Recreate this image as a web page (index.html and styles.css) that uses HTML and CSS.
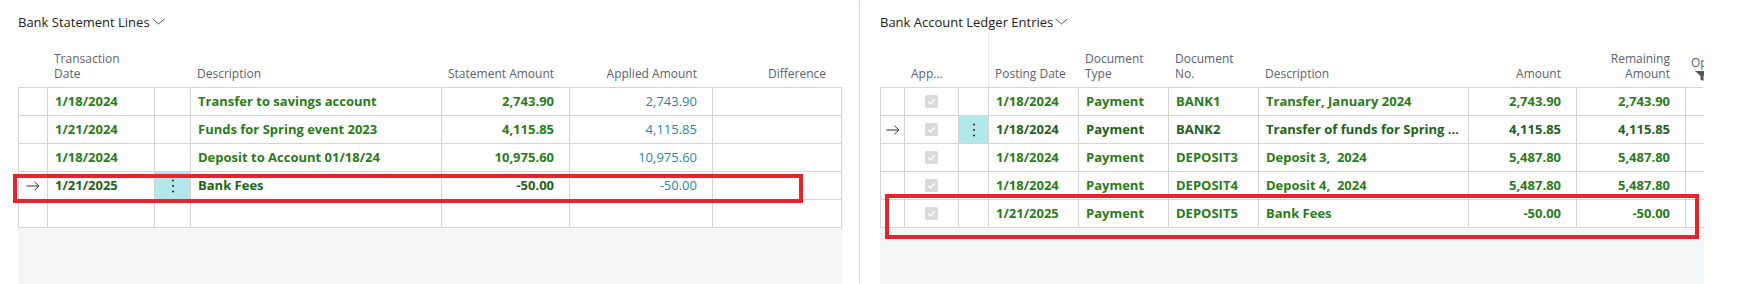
FILE: index.html
```html
<!DOCTYPE html>
<html>
<head>
<meta charset="utf-8">
<link rel="stylesheet" href="styles.css">
</head>
<body>
<div class="page">
  <section class="panel panel-left">
    <div class="title">Bank Statement Lines<svg class="chev" width="13" height="7" viewBox="0 0 13 7"><polyline points="0.5,0.8 6.5,6 12.5,0.8" fill="none" stroke="#555" stroke-width="1"/></svg></div>
    <div class="grid-wrap">
      <div class="head cols-left">
        <div class="hc"></div>
        <div class="hc">Transaction<br>Date</div>
        <div class="hc"></div>
        <div class="hc">Description</div>
        <div class="hc num">Statement Amount</div>
        <div class="hc num">Applied Amount</div>
        <div class="hc num last">Difference</div>
      </div>
      <div class="body">
        <div class="row cols-left">
          <div class="c"></div><div class="c">1/18/2024</div><div class="c"></div><div class="c">Transfer to savings account</div><div class="c num">2,743.90</div><div class="c num applied">2,743.90</div><div class="c"></div>
        </div>
        <div class="row cols-left">
          <div class="c"></div><div class="c">1/21/2024</div><div class="c"></div><div class="c">Funds for Spring event 2023</div><div class="c num">4,115.85</div><div class="c num applied">4,115.85</div><div class="c"></div>
        </div>
        <div class="row cols-left">
          <div class="c"></div><div class="c">1/18/2024</div><div class="c"></div><div class="c">Deposit to Account 01/18/24</div><div class="c num">10,975.60</div><div class="c num applied">10,975.60</div><div class="c"></div>
        </div>
        <div class="row cols-left sel">
          <div class="c ctr"><svg width="14" height="10" viewBox="0 0 14 10"><path d="M0.5 5H13M8.5 0.8L13 5L8.5 9.2" fill="none" stroke="#333" stroke-width="1"/></svg></div><div class="c">1/21/2025</div><div class="c ctr hl"><svg width="4" height="16" viewBox="0 0 4 16"><circle cx="2" cy="2.5" r="1.1" fill="#333"/><circle cx="2" cy="8" r="1.1" fill="#333"/><circle cx="2" cy="13.5" r="1.1" fill="#333"/></svg></div><div class="c">Bank Fees</div><div class="c num">-50.00</div><div class="c num applied">-50.00</div><div class="c"></div>
        </div>
        <div class="row cols-left">
          <div class="c"></div><div class="c"></div><div class="c"></div><div class="c"></div><div class="c"></div><div class="c"></div><div class="c"></div>
        </div>
      </div>
      <div class="filler"></div>
    </div>
  </section>

  <section class="panel panel-right">
    <div class="title">Bank Account Ledger Entries<svg class="chev" width="13" height="7" viewBox="0 0 13 7"><polyline points="0.5,0.8 6.5,6 12.5,0.8" fill="none" stroke="#555" stroke-width="1"/></svg></div>
    <div class="grid-wrap">
      <div class="head cols-right">
        <div class="hc"></div>
        <div class="hc">App...</div>
        <div class="hc divider"></div>
        <div class="hc">Posting Date</div>
        <div class="hc">Document<br>Type</div>
        <div class="hc">Document<br>No.</div>
        <div class="hc">Description</div>
        <div class="hc num">Amount</div>
        <div class="hc num">Remaining<br>Amount</div>
        <div class="hc open">Open<br><svg width="14" height="10" viewBox="0 0 14 10"><path d="M0 0H14L8.5 5V10L5.5 8.5V5Z" fill="#555"/></svg></div>
      </div>
      <div class="body">
        <div class="row cols-right">
          <div class="c"></div><div class="c ctr"><span class="cb"><svg width="13" height="13" viewBox="0 0 13 13"><rect width="13" height="13" rx="2" fill="#d9d9d9"/><polyline points="3.3,6.8 5.5,9 9.8,4.2" fill="none" stroke="#fff" stroke-width="1.4"/></svg></span></div><div class="c"></div><div class="c">1/18/2024</div><div class="c">Payment</div><div class="c">BANK1</div><div class="c">Transfer, January 2024</div><div class="c num">2,743.90</div><div class="c num">2,743.90</div><div class="c"></div>
        </div>
        <div class="row cols-right sel">
          <div class="c ctr"><svg width="14" height="10" viewBox="0 0 14 10"><path d="M0.5 5H13M8.5 0.8L13 5L8.5 9.2" fill="none" stroke="#333" stroke-width="1"/></svg></div><div class="c ctr"><span class="cb"><svg width="13" height="13" viewBox="0 0 13 13"><rect width="13" height="13" rx="2" fill="#d9d9d9"/><polyline points="3.3,6.8 5.5,9 9.8,4.2" fill="none" stroke="#fff" stroke-width="1.4"/></svg></span></div><div class="c ctr hl"><svg width="4" height="16" viewBox="0 0 4 16"><circle cx="2" cy="2.5" r="1.1" fill="#333"/><circle cx="2" cy="8" r="1.1" fill="#333"/><circle cx="2" cy="13.5" r="1.1" fill="#333"/></svg></div><div class="c">1/18/2024</div><div class="c">Payment</div><div class="c">BANK2</div><div class="c ell">Transfer of funds for Spring event 2023</div><div class="c num">4,115.85</div><div class="c num">4,115.85</div><div class="c"></div>
        </div>
        <div class="row cols-right">
          <div class="c"></div><div class="c ctr"><span class="cb"><svg width="13" height="13" viewBox="0 0 13 13"><rect width="13" height="13" rx="2" fill="#d9d9d9"/><polyline points="3.3,6.8 5.5,9 9.8,4.2" fill="none" stroke="#fff" stroke-width="1.4"/></svg></span></div><div class="c"></div><div class="c">1/18/2024</div><div class="c">Payment</div><div class="c">DEPOSIT3</div><div class="c">Deposit 3,&nbsp; 2024</div><div class="c num">5,487.80</div><div class="c num">5,487.80</div><div class="c"></div>
        </div>
        <div class="row cols-right">
          <div class="c"></div><div class="c ctr"><span class="cb"><svg width="13" height="13" viewBox="0 0 13 13"><rect width="13" height="13" rx="2" fill="#d9d9d9"/><polyline points="3.3,6.8 5.5,9 9.8,4.2" fill="none" stroke="#fff" stroke-width="1.4"/></svg></span></div><div class="c"></div><div class="c">1/18/2024</div><div class="c">Payment</div><div class="c">DEPOSIT4</div><div class="c">Deposit 4,&nbsp; 2024</div><div class="c num">5,487.80</div><div class="c num">5,487.80</div><div class="c"></div>
        </div>
        <div class="row cols-right">
          <div class="c"></div><div class="c ctr"><span class="cb"><svg width="13" height="13" viewBox="0 0 13 13"><rect width="13" height="13" rx="2" fill="#d9d9d9"/><polyline points="3.3,6.8 5.5,9 9.8,4.2" fill="none" stroke="#fff" stroke-width="1.4"/></svg></span></div><div class="c"></div><div class="c">1/21/2025</div><div class="c">Payment</div><div class="c">DEPOSIT5</div><div class="c">Bank Fees</div><div class="c num">-50.00</div><div class="c num">-50.00</div><div class="c"></div>
        </div>
      </div>
      <div class="filler"></div>
    </div>
  </section>

  <div class="mark mark-left"></div>
  <div class="mark mark-right"></div>
</div>
</body>
</html>
```

FILE: styles.css
```css
html, body {
  margin: 0;
  padding: 0;
  background: #ffffff;
}
body {
  font-family: "Open Sans", "Noto Sans", sans-serif;
  color: #212121;
}
.page {
  position: relative;
  display: flex;
  width: 1738px;
  height: 284px;
  overflow: hidden;
}
.panel {
  display: flex;
  flex-direction: column;
  height: 284px;
  box-sizing: border-box;
}
.panel-left {
  width: 860px;
  padding-left: 18px;
  border-right: 1px dotted #c4c4c4;
}
.panel-right {
  width: 844px;
  padding-left: 20px;
}
.title {
  height: 32px;
  box-sizing: border-box;
  padding-top: 13px;
  font-size: 13px;
  line-height: 18px;
  color: #212121;
  white-space: nowrap;
}
.chev {
  margin-left: 2px;
  vertical-align: 2px;
}
.grid-wrap {
  flex: 1;
  display: flex;
  flex-direction: column;
  overflow: hidden;
}
.panel-left .grid-wrap { width: 824px; }
.panel-right .grid-wrap { width: 824px; }

.cols-left {
  display: grid;
  grid-template-columns: 29px 107px 36px 251px 128px 143px 129px;
}
.cols-right {
  display: grid;
  grid-template-columns: 24px 54px 30px 90px 90px 90px 210px 108px 109px 100px;
}
.head {
  height: 55px;
  box-sizing: border-box;
  padding-left: 1px;
  align-items: end;
  padding-bottom: 6px;
}
.hc {
  font-size: 12px;
  line-height: 15px;
  color: #5b616b;
  padding: 0 6px;
  white-space: nowrap;
  overflow: hidden;
}
.hc.num {
  text-align: right;
  padding-right: 16px;
}
.hc.divider {
  align-self: stretch;
  margin-bottom: -6px;
  border-right: 1px solid #e6e6e6;
}
.hc.open {
  padding-left: 5px;
  overflow: visible;
}
.hc.open svg {
  display: block;
  margin-top: 1px;
  margin-left: 4px;
}
.body {
  border-top: 1px solid #d4d4d4;
  border-left: 1px solid #d4d4d4;
  background: #ffffff;
}
.row {
  height: 28px;
  box-sizing: border-box;
  border-bottom: 1px solid #d4d4d4;
}
.c {
  border-right: 1px solid #d4d4d4;
  padding: 0 7px;
  font-size: 13px;
  font-weight: 700;
  line-height: 27px;
  color: #2a7b1c;
  white-space: nowrap;
  overflow: hidden;
}
.sel .c { color: #22621a; }
.c.num {
  text-align: right;
  padding-right: 15px;
}
.c.applied {
  font-weight: 400;
  color: #1d8aa1;
}
.sel .c.applied { color: #1d8aa1; }
.c.ctr {
  display: flex;
  align-items: center;
  justify-content: center;
  padding: 0;
}
.c.hl { background: #b3e8ea; }
.c.ell { text-overflow: ellipsis; }
.cb {
  display: flex;
}
.filler {
  flex: 1;
  background: #f5f6f8;
}
.mark {
  position: absolute;
  border: 4px solid #e8232b;
  box-sizing: border-box;
}
.mark-left {
  left: 13px;
  top: 174px;
  width: 790px;
  height: 29px;
}
.mark-right {
  left: 885px;
  top: 194px;
  width: 814px;
  height: 45px;
}
```
